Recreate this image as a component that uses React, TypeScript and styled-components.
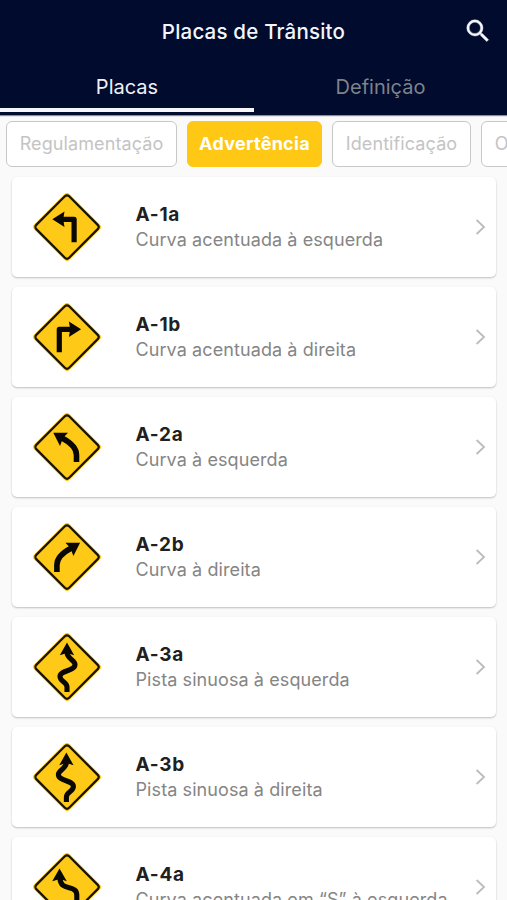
import React from "react";
import styled, { createGlobalStyle } from "styled-components";

const GlobalStyle = createGlobalStyle`
  * { box-sizing: border-box; }
  html, body { margin: 0; height: 100%; overflow: hidden; background: #fafafa; }
  body { font-family: Inter, "Liberation Sans", sans-serif; }
  button { font: inherit; letter-spacing: inherit; border: 0; background: none; padding: 0; }
`;

const Screen = styled.div`
  width: 507px;
  height: 900px;
  overflow: hidden;
  background: #fafafa;
`;

const Header = styled.header`
  height: 115px;
  background: #000b2d;
  color: #f4f6fb;
  box-shadow: 0 1px 1px rgba(0, 11, 45, 0.45);
`;

const TitleBar = styled.div`
  display: grid;
  grid-template-columns: 60px 1fr 60px;
  align-items: center;
  height: 63px;
`;

const Title = styled.h1`
  grid-column: 2;
  margin: 0;
  text-align: center;
  font-size: 20.5px;
  line-height: 24px;
  font-weight: 500;
  letter-spacing: 0.2px;
  white-space: nowrap;
`;

const SearchButton = styled.button`
  display: flex;
  justify-content: center;
  padding: 0 0 1px 1px;
  color: #f4f6fb;
`;

const Tabs = styled.nav`
  display: grid;
  grid-template-columns: 254px 253px;
  height: 49px;
`;

const Tab = styled.button<{ $active?: boolean }>`
  padding-top: 3px;
  font-size: 20px;
  line-height: 24px;
  font-weight: 400;
  letter-spacing: 0;
  color: ${(p) => (p.$active ? "#eef1f8" : "#7d838b")};
  border-bottom: 4px solid ${(p) => (p.$active ? "#f5f5fa" : "transparent")};
`;

const Filters = styled.div`
  display: flex;
  gap: 10px;
  height: 62px;
  padding: 6px 0 10px 6px;
  overflow: hidden;
`;

const Chip = styled.button<{ $active?: boolean; $width: number }>`
  flex: 0 0 ${(p) => p.$width}px;
  height: 46px;
  padding-bottom: 2px;
  border-radius: 6px;
  border: ${(p) => (p.$active ? "1px solid #ffc815" : "1.5px solid #c8c8c8")};
  background: ${(p) => (p.$active ? "#ffc815" : "#fff")};
  color: ${(p) => (p.$active ? "#fff" : "#c4c4c4")};
  font-size: 18px;
  font-weight: ${(p) => (p.$active ? 700 : 400)};
  letter-spacing: ${(p) => (p.$active ? 0.28 : 0.1)}px;
  white-space: nowrap;
`;

const List = styled.main`
  display: flex;
  flex-direction: column;
  gap: 10px;
  padding: 0 11px 0 12px;
`;

const Card = styled.article`
  display: grid;
  grid-template-columns: 68px minmax(0, 1fr) 12px;
  column-gap: 34.5px;
  align-items: center;
  height: 100px;
  flex-shrink: 0;
  padding: 0 9px 0 21px;
  border-radius: 5px;
  background: #fff;
  box-shadow: 0 1px 2px rgba(0, 0, 0, 0.24);
`;

const Info = styled.div`
  white-space: nowrap;
`;

const Code = styled.h2`
  margin: 0;
  padding-top: 1px;
  font-size: 19px;
  line-height: 24px;
  font-weight: 650;
  letter-spacing: 0.75px;
  color: #202020;
`;

const Description = styled.p`
  margin: 0;
  font-size: 18px;
  line-height: 25px;
  letter-spacing: 0.09px;
  color: #858585;
`;

type Glyph = { shaft: string; head: string; width: number; mirror?: boolean };

const sharp: Glyph = {
  shaft: "M41.1 49.2V26.3H28",
  head: "M19.3 26.3L31.5 18.6L30.2 26.3L31.5 34Z",
  width: 5.2,
};
const curve: Glyph = {
  shaft: "M43.5 49V42C43.5 34.5 37.5 29.5 29 25",
  head: "M20.3 19.7L35 19.8L30 25L27 33Z",
  width: 5.6,
};
const winding: Glyph = {
  shaft: "M34 59V54C34 49 27 48.5 27 43.5C27 37 42 38.5 42 31.5C42 27 34 26 34 19",
  head: "M34 9.4L41.2 22.3L34 20L26.8 22.3Z",
  width: 5.1,
};
const reverse: Glyph = {
  shaft: "M43.8 54V42C43.8 31 27 39 27 25",
  head: "M26.5 15.5L33.8 28.2L27 26L19.2 28.2Z",
  width: 5.1,
};

const signs = [
  { code: "A-1a", text: "Curva acentuada à esquerda", glyph: sharp },
  { code: "A-1b", text: "Curva acentuada à direita", glyph: { ...sharp, mirror: true } },
  { code: "A-2a", text: "Curva à esquerda", glyph: curve },
  { code: "A-2b", text: "Curva à direita", glyph: { ...curve, mirror: true } },
  { code: "A-3a", text: "Pista sinuosa à esquerda", glyph: winding },
  { code: "A-3b", text: "Pista sinuosa à direita", glyph: { ...winding, mirror: true } },
  { code: "A-4a", text: "Curva acentuada em “S” à esquerda", glyph: reverse },
];

function Sign({ glyph }: { glyph: Glyph }) {
  return (
    <svg width="68" height="68" viewBox="0 0 68 68" aria-hidden="true">
      <rect x="8.9" y="8.9" width="50.2" height="50.2" rx="4" fill="#ffcb19" transform="rotate(45 34 34)" />
      <rect x="10.8" y="10.8" width="46.4" height="46.4" rx="3" fill="#ffc917" stroke="#171306" strokeWidth="2.2" transform="rotate(45 34 34)" />
      <g transform={glyph.mirror ? "translate(67.4 0) scale(-1 1)" : undefined}>
        <path d={glyph.shaft} fill="none" stroke="#090805" strokeWidth={glyph.width} strokeLinejoin="round" />
        <path d={glyph.head} fill="#090805" />
      </g>
    </svg>
  );
}

export default function App() {
  return (
    <>
      <GlobalStyle />
      <Screen>
        <Header>
          <TitleBar>
            <Title>Placas de Trânsito</Title>
            <SearchButton aria-label="Buscar">
              <svg width="30" height="30" viewBox="0 0 24 24" fill="currentColor">
                <path d="M15.5 14h-.79l-.28-.27A6.47 6.47 0 0 0 16 9.5 6.5 6.5 0 1 0 9.5 16c1.61 0 3.09-.59 4.23-1.57l.27.28v.79l5 4.99L20.49 19l-4.99-5zm-6 0C7.01 14 5 11.99 5 9.5S7.01 5 9.5 5 14 7.01 14 9.5 11.99 14 9.5 14z" stroke="currentColor" strokeWidth="0.3" />
              </svg>
            </SearchButton>
          </TitleBar>
          <Tabs>
            <Tab $active>Placas</Tab>
            <Tab>Definição</Tab>
          </Tabs>
        </Header>
        <Filters>
          <Chip $width={171}>Regulamentação</Chip>
          <Chip $width={135} $active>Advertência</Chip>
          <Chip $width={139}>Identificação</Chip>
          <Chip $width={85}>Outras</Chip>
        </Filters>
        <List>
          {signs.map((sign) => (
            <Card key={sign.code}>
              <Sign glyph={sign.glyph} />
              <Info>
                <Code>{sign.code}</Code>
                <Description>{sign.text}</Description>
              </Info>
              <svg width="12" height="18" viewBox="0 0 12 18" fill="none" stroke="#bcbcbc" strokeWidth="1.8">
                <path d="M1.6 2L9 9L1.6 16" />
              </svg>
            </Card>
          ))}
        </List>
      </Screen>
    </>
  );
}
